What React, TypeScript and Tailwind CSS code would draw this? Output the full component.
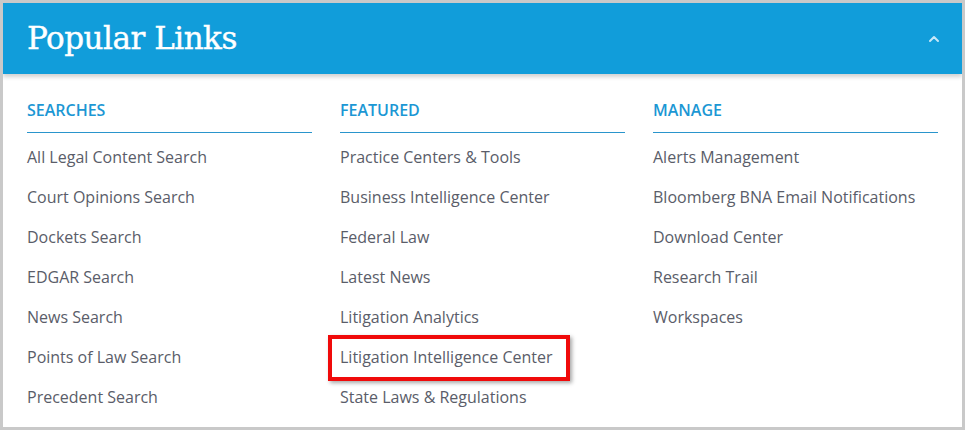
import { ChevronUp } from 'lucide-react';

const columns = [
  {
    title: 'Searches',
    links: [
      'All Legal Content Search',
      'Court Opinions Search',
      'Dockets Search',
      'EDGAR Search',
      'News Search',
      'Points of Law Search',
      'Precedent Search',
    ],
  },
  {
    title: 'Featured',
    links: [
      'Practice Centers & Tools',
      'Business Intelligence Center',
      'Federal Law',
      'Latest News',
      'Litigation Analytics',
      'Litigation Intelligence Center',
      'State Laws & Regulations',
    ],
  },
  {
    title: 'Manage',
    links: [
      'Alerts Management',
      'Bloomberg BNA Email Notifications',
      'Download Center',
      'Research Trail',
      'Workspaces',
    ],
  },
];

export default function App() {
  return (
    <div className="w-[965px] h-[430px] bg-white border-[3px] border-[#c9c9c9] flex flex-col overflow-hidden">
      <div className="relative z-10 h-[71px] bg-[#119dda] flex items-center justify-between pl-6 pr-5 shadow-[0_3px_4px_rgba(0,0,0,0.18)]">
        <h1 className="text-white text-[31px] leading-none font-['DejaVu_Serif',serif] tracking-[-0.5px] [-webkit-text-stroke:0.4px_white]">
          Popular Links
        </h1>
        <ChevronUp className="w-4 h-4 text-[#c6e7f8]" strokeWidth={3} />
      </div>

      <div className="grid grid-cols-3 gap-7 px-6 pt-[26px] font-['Open_Sans',sans-serif]">
        {columns.map((col) => (
          <div key={col.title}>
            <h2 className="uppercase text-[16px] leading-5 font-semibold text-[#1c97d4] pb-[12px] border-b border-[#2a95cc]">
              {col.title}
            </h2>
            <ul className="mt-1">
              {col.links.map((link) => (
                <li key={link} className="relative h-10 flex items-center text-[16px] text-[#5a5d69]">
                  {link === 'Litigation Intelligence Center' && (
                    <div className="absolute left-[-12px] top-[-2px] w-[242px] h-[46px] border-4 border-[#f00a0a] shadow-[2px_2px_4px_rgba(0,0,0,0.35)]" />
                  )}
                  <span className="relative">{link}</span>
                </li>
              ))}
            </ul>
          </div>
        ))}
      </div>
    </div>
  );
}
